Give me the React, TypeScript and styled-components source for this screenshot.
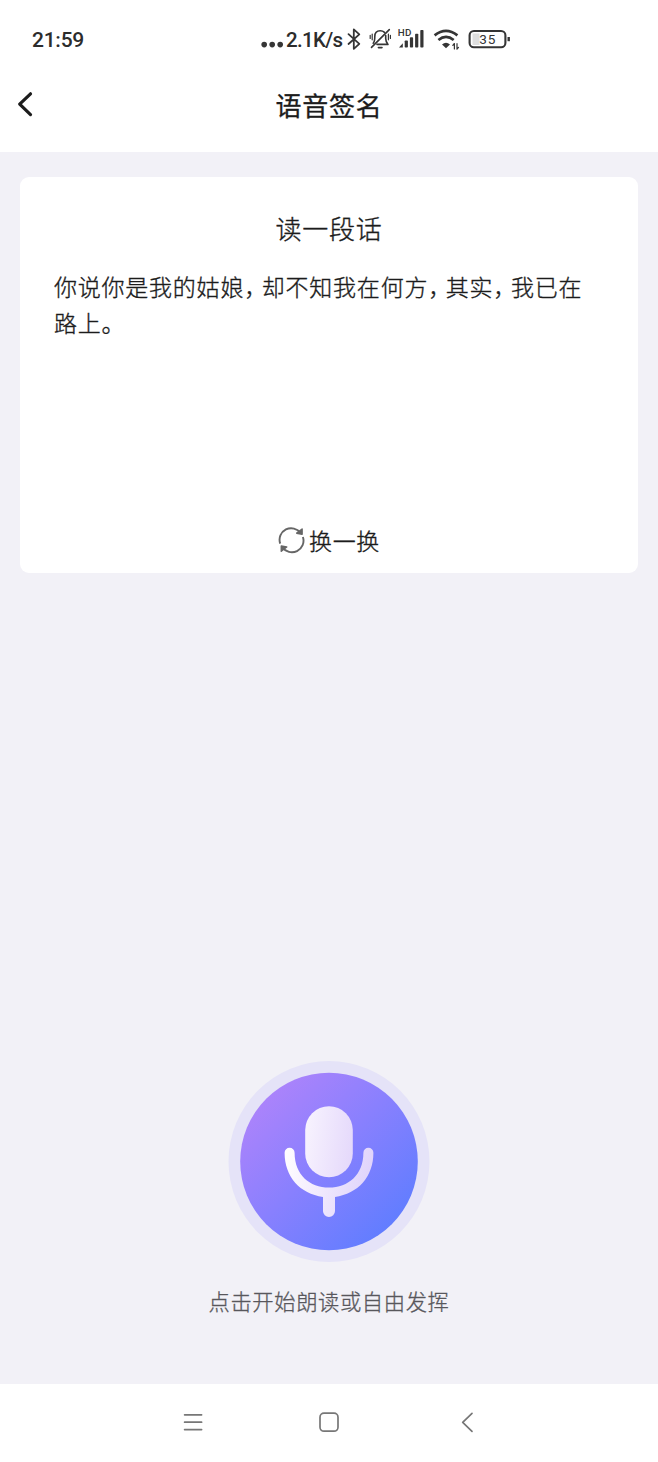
import React from "react";
import styled, { createGlobalStyle } from "styled-components";

const GlobalStyle = createGlobalStyle`
  * { box-sizing: border-box; }
  body {
    margin: 0;
    background: #f2f1f7;
    font-family: "Noto Sans CJK SC", "Noto Sans", sans-serif;
    color: #1c1c1c;
  }
  svg { display: block; flex: none; }
`;

const Screen = styled.div`
  width: 658px;
  height: 1462px;
  display: flex;
  flex-direction: column;
  background: #f2f1f7;
  overflow: hidden;
`;

const Header = styled.header`
  height: 152px;
  flex: none;
  background: #fff;
`;

const StatusBar = styled.div`
  height: 60px;
  padding: 18px 0 0 32px;
  display: flex;
  font-family: Roboto, sans-serif;
  font-weight: 500;
  font-size: 21px;
  line-height: 44px;
  color: #2c2c2c;
`;

const Clock = styled.div`
  width: 229px;
  letter-spacing: -0.25px;
`;

const Speed = styled.div`
  width: 59px;
  margin-left: 2px;
  font-size: 20.5px;
  letter-spacing: -0.7px;
  white-space: nowrap;
`;

const StatusIcon = styled.svg`
  height: 42px;
`;

const TitleBar = styled.div`
  height: 92px;
  display: grid;
  grid-template-columns: 50px 1fr 50px;
  align-items: center;
`;

const BackButton = styled.button`
  height: 92px;
  padding: 0;
  border: 0;
  background: none;
`;

const Title = styled.h1`
  margin: 0;
  font-size: 26px;
  line-height: 90px;
  height: 92px;
  letter-spacing: 0.7px;
  font-weight: 400;
  -webkit-text-stroke: 0.3px currentColor;
  text-align: center;
`;

const Main = styled.main`
  flex: 1;
  padding: 25px 20px 0;
  display: flex;
  flex-direction: column;
  align-items: center;
`;

const Card = styled.section`
  width: 618px;
  height: 396px;
  padding: 31px 34px 13px;
  border-radius: 9px;
  background: #fff;
  display: flex;
  flex-direction: column;
  font-weight: 300;
  -webkit-text-stroke: 0.35px currentColor;
`;

const CardTitle = styled.h2`
  margin: 0 0 20px;
  font-size: 26px;
  line-height: 40px;
  letter-spacing: 0.7px;
  font-weight: inherit;
  text-align: center;
`;

const Passage = styled.p`
  margin: 0;
  font-size: 23px;
  line-height: 36px;
  letter-spacing: 0.77px;
`;

const Comma = styled.span`
  font-feature-settings: "halt";
  letter-spacing: 6.1px;
`;

const RefreshButton = styled.button`
  margin: auto auto 0;
  padding: 0;
  border: 0;
  background: none;
  display: flex;
  align-items: center;
  gap: 4px;
  font: inherit;
  color: inherit;
  font-size: 23px;
  line-height: 40px;
  letter-spacing: 0.7px;
`;

const MicButton = styled.button`
  width: 202px;
  height: 202px;
  margin: 488px 0 0;
  padding: 0;
  border: 0;
  border-radius: 50%;
  background: none;
`;

const Hint = styled.p`
  margin: 21px 0 0;
  font-size: 21.3px;
  line-height: 34px;
  letter-spacing: 0.6px;
  font-weight: 300;
  -webkit-text-stroke: 0.3px currentColor;
  color: #58575c;
`;

const NavBar = styled.nav`
  height: 78px;
  flex: none;
  background: #fff;
  display: flex;
  justify-content: center;
`;

const StatusIcons = () => (
  <StatusIcon width="172" viewBox="345 18 172 42" fill="none" stroke="#353535" strokeLinecap="round" strokeLinejoin="round">
    <path d="M348.5 34.2L359.3 43.8L353.8 48.8V29.4L359.3 34.3L348.5 44" strokeWidth="1.8" />
    <g strokeWidth="1.6">
      <path d="M373.2 43.2C374.8 41.5 374.8 39.5 374.8 36.5C374.8 32.8 376.8 30.8 380.2 30.8C382 30.8 383.4 31.3 384.5 32.4M385.7 35.5V38.5C385.7 41 386.2 42.3 388 44.4H377" />
      <path d="M371.5 47.4L389.3 29.6M378.4 47.6H382" />
      <path d="M372.2 34V39.8M370.2 35.3V38.5M388.4 34V39.8M390.4 35.3V38.5" strokeWidth="1.2" />
    </g>
    <g stroke="none" fill="#353535">
      <text x="397.7" y="36.3" fontSize="9.8" fontWeight="500" fontFamily="Roboto, sans-serif" letterSpacing="0.3">HD</text>
      <path d="M399 47.5L402.8 43.2V47.5Z" />
      <rect x="404.7" y="40.5" width="3.2" height="7" rx="0.8" />
      <rect x="409.9" y="37.2" width="3.2" height="10.3" rx="0.8" />
      <rect x="415.1" y="33.7" width="3.2" height="13.8" rx="0.8" />
      <rect x="420.3" y="30" width="3.2" height="17.5" rx="0.8" />
      <path d="M442 44.4Q446 41.2 450 44.4L446 48.2Z" />
    </g>
    <path d="M434.6 35.4Q446 26.4 457.4 35.4M438.4 40Q446 33.8 453.7 40" strokeWidth="2.7" strokeLinecap="butt" />
    <path d="M454.4 49V43.5L452.8 45.3M457 43.7V49.2L458.5 47.4" strokeWidth="1.2" />
    <rect x="472.5" y="33.5" width="7" height="11.5" fill="#dedede" stroke="none" />
    <rect x="469.6" y="31" width="35.8" height="16.3" rx="4.3" strokeWidth="2.1" />
    <path d="M508.7 37V41.2" strokeWidth="2.4" strokeLinecap="butt" />
    <text x="487.8" y="44.2" textAnchor="middle" fontSize="13.6" fontWeight="400" fontFamily="Roboto, sans-serif" letterSpacing="0.8" fill="#353535" stroke="none">35</text>
  </StatusIcon>
);

const Microphone = () => (
  <svg width="202" height="202" viewBox="0 0.5 202 202">
    <defs>
      <linearGradient id="disc" x1="0.08" y1="0.2" x2="0.82" y2="0.95">
        <stop offset="0" stopColor="#ab83fb" />
        <stop offset="0.45" stopColor="#8980fe" />
        <stop offset="1" stopColor="#5f7dff" />
      </linearGradient>
      <linearGradient id="capsule" x1="0" y1="0.4" x2="1" y2="0.6">
        <stop offset="0" stopColor="#f7f2fe" />
        <stop offset="1" stopColor="#e5d9fb" />
      </linearGradient>
      <linearGradient id="stand" gradientUnits="userSpaceOnUse" x1="57" y1="95" x2="146" y2="115">
        <stop offset="0" stopColor="#fffdff" />
        <stop offset="1" stopColor="#dfd2fb" />
      </linearGradient>
    </defs>
    <circle cx="101" cy="101" r="100.5" fill="#e5e3f8" />
    <circle cx="101" cy="101" r="88.8" fill="url(#disc)" />
    <rect x="77.2" y="45.8" width="47.6" height="71" rx="23.8" fill="url(#capsule)" />
    <path
      d="M56.6 92.2a5 5 0 0 1 10 0c0 22 15 34.8 34.4 34.8s34.4-12.8 34.4-34.8a5 5 0 0 1 10 0c0 24-15.4 41-38.4 44.2v14a6 6 0 0 1-12 0v-14c-23-3.2-38.4-20.2-38.4-44.2Z"
      fill="url(#stand)"
    />
  </svg>
);

export default function App() {
  return (
    <Screen>
      <GlobalStyle />
      <Header>
        <StatusBar>
          <Clock>21:59</Clock>
          <StatusIcon width="23" viewBox="0 0 23 42" fill="#353535">
            <circle cx="3.2" cy="26.6" r="2.8" />
            <circle cx="11.2" cy="26.6" r="2.8" />
            <circle cx="19.2" cy="26.6" r="2.8" />
          </StatusIcon>
          <Speed>2.1K/s</Speed>
          <StatusIcons />
        </StatusBar>
        <TitleBar>
          <BackButton aria-label="返回">
            <svg width="50" height="92" viewBox="0 0 50 92" fill="none" stroke="#1c1c1c" strokeWidth="3.2" strokeLinecap="round" strokeLinejoin="round">
              <path d="M30.5 33.8L19.7 44.2L30.5 54.6" />
            </svg>
          </BackButton>
          <Title>语音签名</Title>
        </TitleBar>
      </Header>
      <Main>
        <Card>
          <CardTitle>读一段话</CardTitle>
          <Passage>
            你说你是我的姑娘<Comma>{"\uff0c"}</Comma>却不知我在何方<Comma>{"\uff0c"}</Comma>其实<Comma>{"\uff0c"}</Comma>我已在路上。
          </Passage>
          <RefreshButton>
            <svg width="27" height="28" viewBox="277.5 526 27 28" fill="none" stroke="#666" strokeWidth="1.9" strokeLinejoin="round">
              <path d="M279.7 543.6A11.6 11.6 0 0 1 300.2 533.2M302.4 537A11.6 11.6 0 0 1 281.8 547.2" />
              <path d="M301.6 529V534.2L296.2 533.2ZM280.8 551.2V546L286.2 547Z" strokeWidth="1.5" fill="#666" />
            </svg>
            换一换
          </RefreshButton>
        </Card>
        <MicButton aria-label="录音">
          <Microphone />
        </MicButton>
        <Hint>点击开始朗读或自由发挥</Hint>
      </Main>
      <NavBar>
        <svg width="300" height="78" viewBox="179 1384 300 78" fill="none" stroke="#777" strokeWidth="1.7" strokeLinecap="round" strokeLinejoin="round">
          <path d="M184.6 1414.8H201.6M184.6 1422.2H201.6M184.6 1429.6H201.6" />
          <rect x="320" y="1413.2" width="18" height="18" rx="4" />
          <path d="M472 1413.4L462.7 1422.4L472 1431.4" />
        </svg>
      </NavBar>
    </Screen>
  );
}
